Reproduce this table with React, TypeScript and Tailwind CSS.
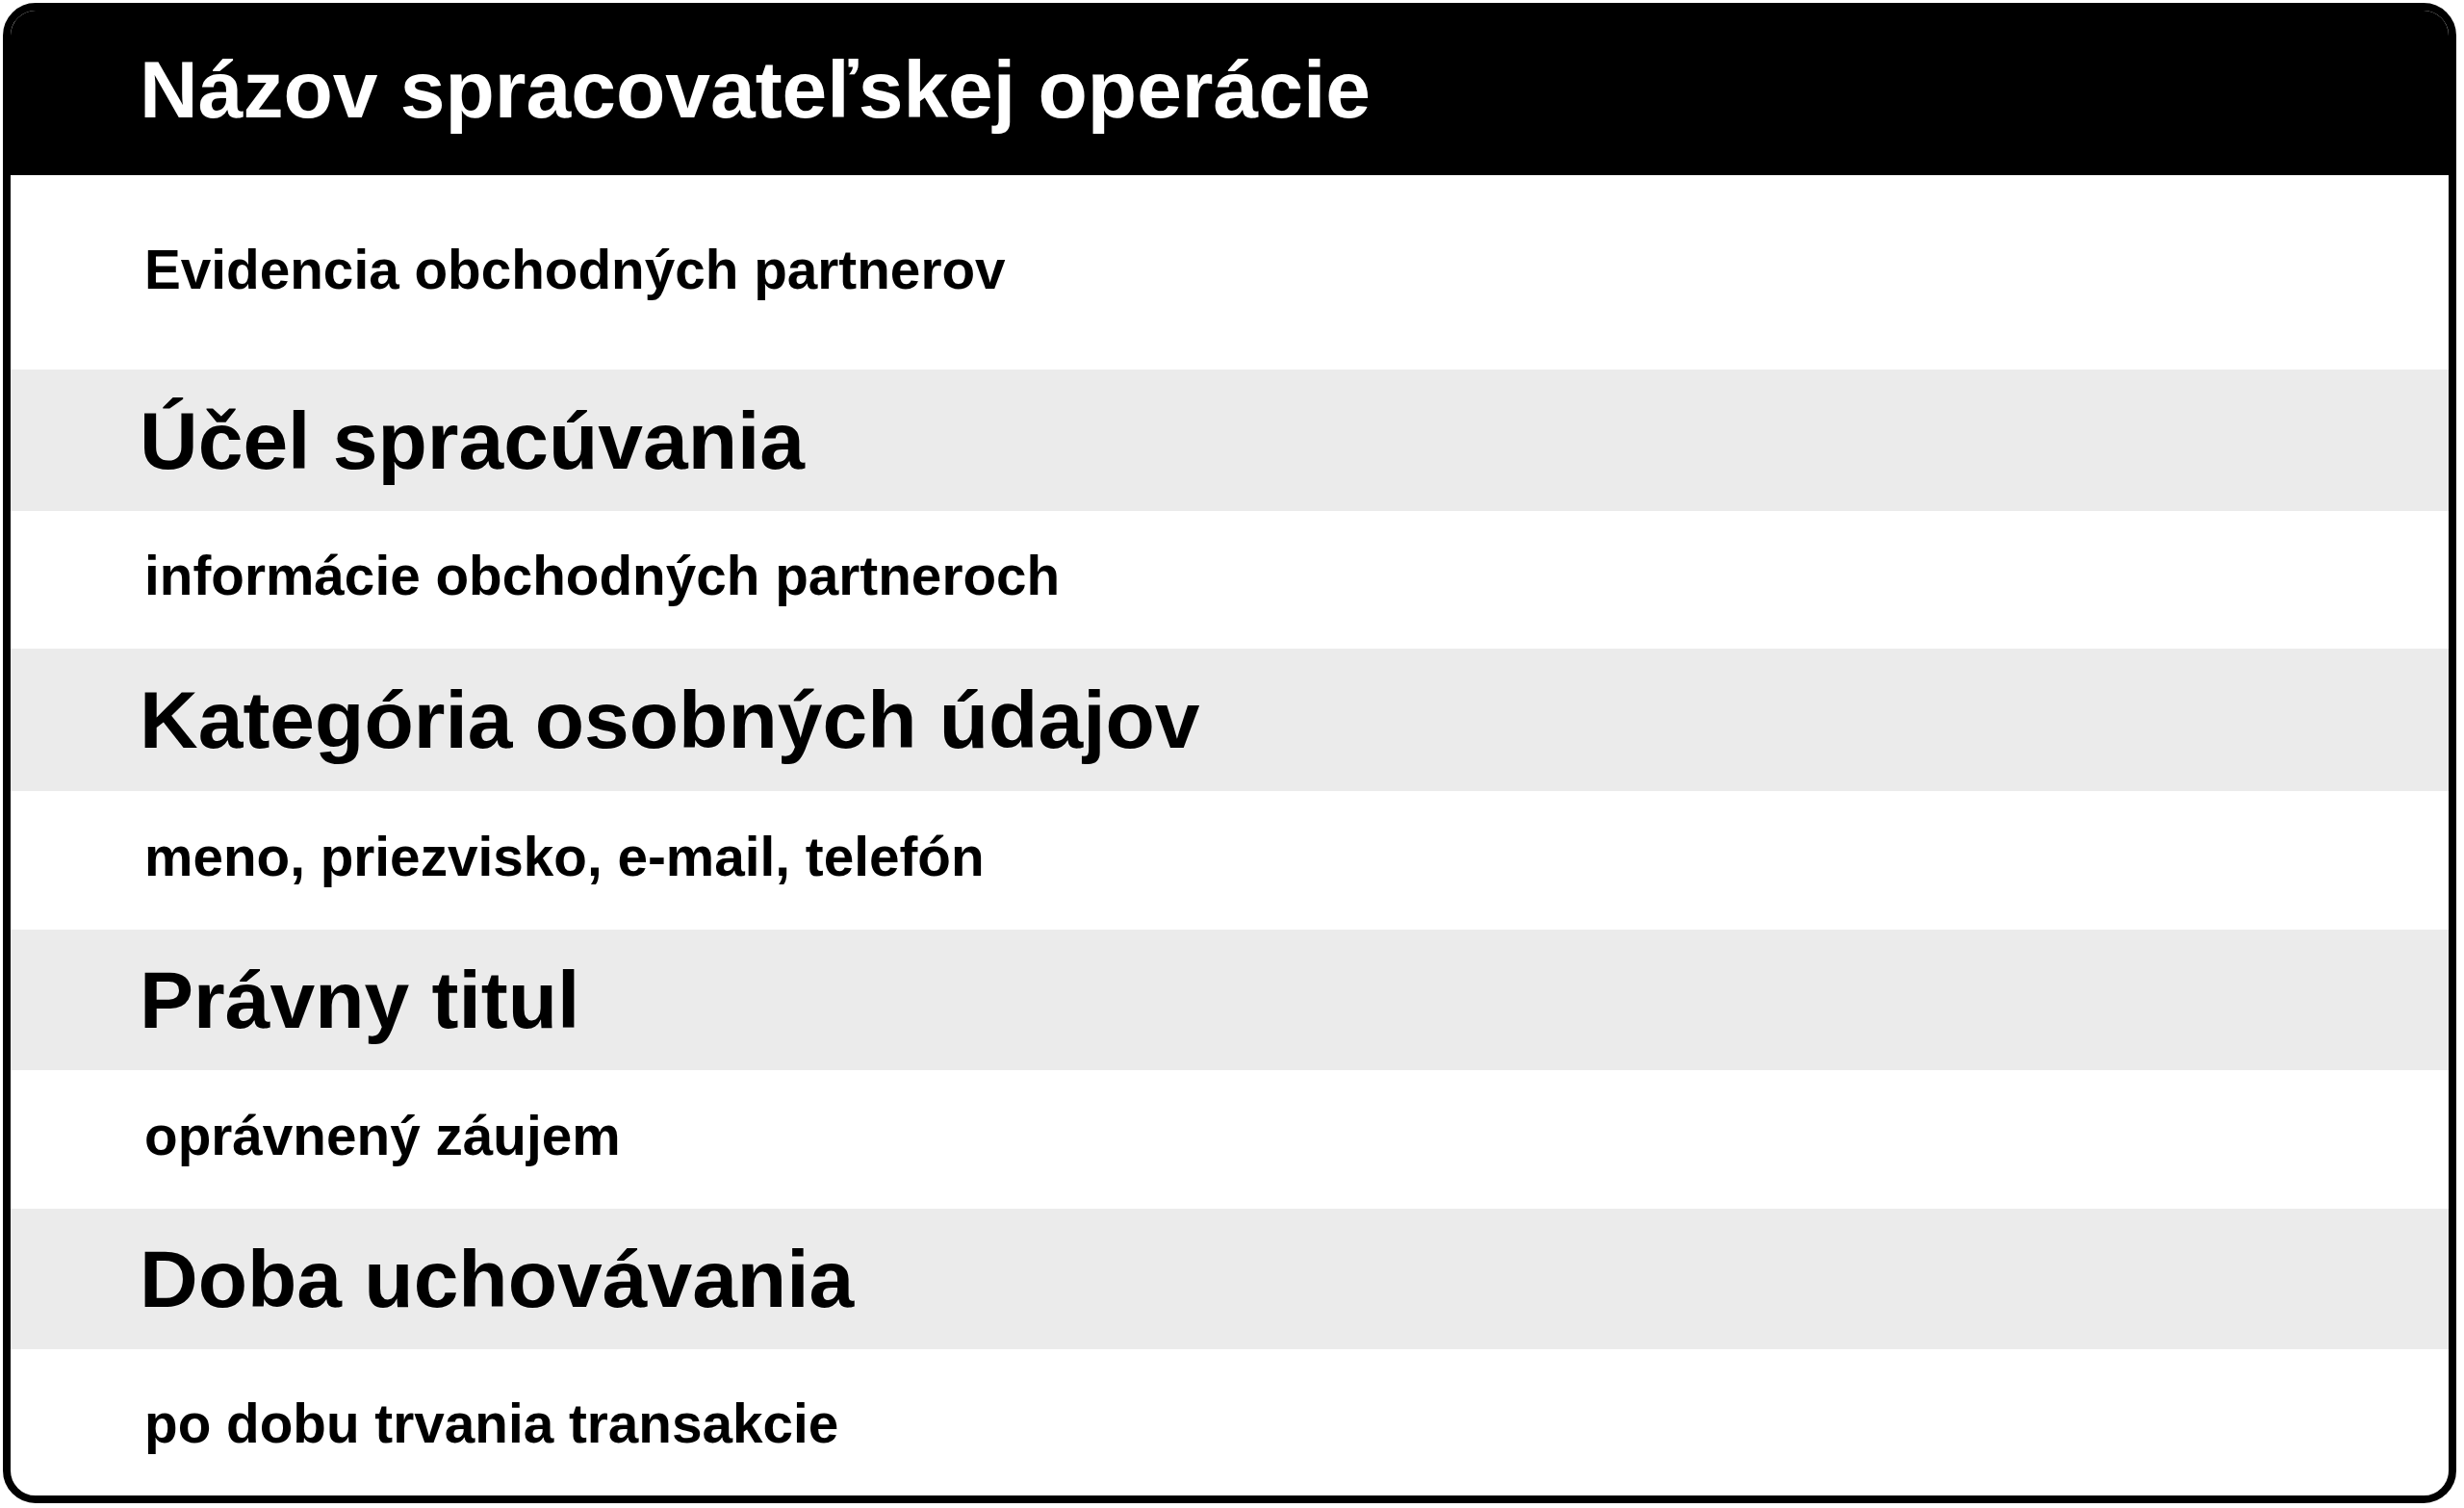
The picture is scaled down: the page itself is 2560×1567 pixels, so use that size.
import React from "react";

const rows: { title: string; value: string }[] = [
  { title: "Účel spracúvania", value: "informácie obchodných partneroch" },
  { title: "Kategória osobných údajov", value: "meno, priezvisko, e-mail, telefón" },
  { title: "Právny titul", value: "oprávnený záujem" },
  { title: "Doba uchovávania", value: "po dobu trvania transakcie" },
];

const grayH = ["h-[147px]", "h-[148px]", "h-[146px]", "h-[146px]"];
const whiteH = [
  "h-[143px] pb-[6px]",
  "h-[144px] pb-[6px]",
  "h-[144px] pb-[6px]",
  "flex-1 pt-[4px]",
];

export default function App() {
  return (
    <div
      className="w-[2560px] h-[1567px] bg-white overflow-hidden"
      style={{ fontFamily: '"Liberation Sans", Arial, sans-serif' }}
    >
      <div className="ml-[3px] mt-[3px] w-[2549px] h-[1559px] border-[8px] border-black rounded-[34px] overflow-hidden flex flex-col bg-white">
        <div className="h-[171px] shrink-0 bg-black flex items-center pl-[134px] pb-[7px]">
          <h1 className="text-white font-bold text-[84px] leading-none">
            Názov spracovateľskej operácie
          </h1>
        </div>
        <div className="h-[202px] shrink-0 flex items-center pl-[139px] pb-[4px]">
          <p className="text-black font-bold text-[56.7px] leading-none">
            Evidencia obchodných partnerov
          </p>
        </div>
        {rows.map((r, i) => (
          <React.Fragment key={r.title}>
            <div
              className={`${grayH[i]} shrink-0 bg-[#ebebeb] flex items-center pl-[134px]`}
            >
              <h2 className="text-black font-bold text-[84px] leading-none">
                {r.title}
              </h2>
            </div>
            <div className={`${whiteH[i]} shrink-0 flex items-center pl-[139px]`}>
              <p className="text-black font-bold text-[56.7px] leading-none">
                {r.value}
              </p>
            </div>
          </React.Fragment>
        ))}
      </div>
    </div>
  );
}
